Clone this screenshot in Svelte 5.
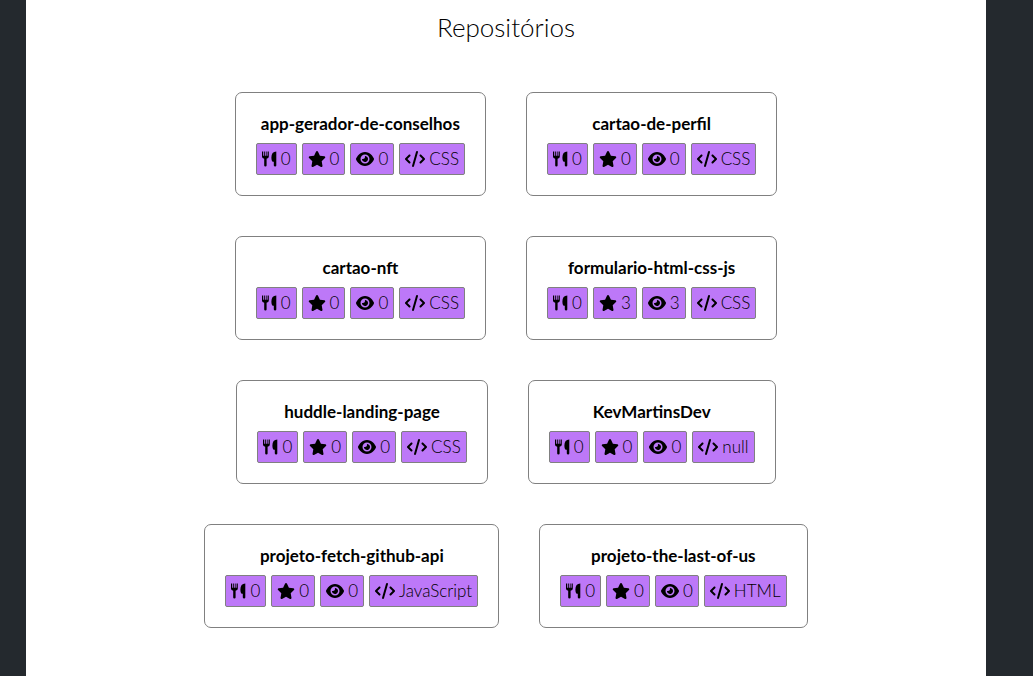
<script>
  const repos = [
    { name: 'app-gerador-de-conselhos', forks: 0, stars: 0, watchers: 0, language: 'CSS' },
    { name: 'cartao-de-perfil', forks: 0, stars: 0, watchers: 0, language: 'CSS' },
    { name: 'cartao-nft', forks: 0, stars: 0, watchers: 0, language: 'CSS' },
    { name: 'formulario-html-css-js', forks: 0, stars: 3, watchers: 3, language: 'CSS' },
    { name: 'huddle-landing-page', forks: 0, stars: 0, watchers: 0, language: 'CSS' },
    { name: 'KevMartinsDev', forks: 0, stars: 0, watchers: 0, language: 'null' },
    { name: 'projeto-fetch-github-api', forks: 0, stars: 0, watchers: 0, language: 'JavaScript' },
    { name: 'projeto-the-last-of-us', forks: 0, stars: 0, watchers: 0, language: 'HTML' }
  ];
</script>

<main>
  <section>
    <h2>Repositórios</h2>
    <ul class="repos">
      {#each repos as repo}
        <li class="card">
          <h3>{repo.name}</h3>
          <ul class="tags">
            <li>
              <svg width="15" height="16" viewBox="0 0 15 16" aria-hidden="true">
                <path d="M0 .5h1.200v4.200h1V.5h.8v4.200h.8V.5h.8v4.200h1V.5h1.200v5.300Q6.800 7.400 4.600 7.700v6.800q0 1-1.200 1t-1.200-1V7.700Q0 7.400 0 5.800zM14.300.5v14q0 1-1.200 1t-1.300-1v-3.700H11Q9.400 10.500 9.400 6.500 9.400.5 14.300.5z" />
              </svg>
              <span>{repo.forks}</span>
            </li>
            <li>
              <svg width="18" height="16" viewBox="0 0 576 512" aria-hidden="true">
                <path d="M316.900 18C311.600 7 300.400 0 288.100 0s-23.400 7-28.800 18L195 150.300 51.400 171.500c-12 1.800-22 10.200-25.700 21.700s-.7 24.200 7.900 32.700L137.800 329 113.200 474.700c-2 12 3 24.200 12.900 31.300s23 8 33.800 2.300l128.300-68.500 128.300 68.500c10.800 5.700 23.900 4.900 33.800-2.300s14.900-19.300 12.900-31.300L438.500 329 542.700 225.900c8.600-8.500 11.700-21.200 7.900-32.700s-13.700-19.900-25.700-21.700L381.200 150.300 316.900 18z" />
              </svg>
              <span>{repo.stars}</span>
            </li>
            <li>
              <svg width="18" height="16" viewBox="0 0 576 512" aria-hidden="true">
                <path d="M288 32c-80.800 0-145.500 36.800-192.600 80.600C48.600 156 17.300 208 2.500 243.700c-3.300 7.900-3.300 16.700 0 24.600C17.300 304 48.600 356 95.400 399.400 142.500 443.200 207.200 480 288 480s145.500-36.800 192.600-80.600c46.800-43.500 78.100-95.400 93-131.100 3.300-7.900 3.300-16.700 0-24.600-14.900-35.700-46.200-87.700-93-131.100C433.500 68.800 368.800 32 288 32zM144 256a144 144 0 1 1 288 0 144 144 0 1 1-288 0zm144-64c0 35.300-28.700 64-64 64-7.100 0-13.900-1.200-20.300-3.300-5.500-1.800-11.900 1.600-11.700 7.400.3 6.900 1.300 13.800 3.200 20.700 13.700 51.200 66.400 81.600 117.600 67.900s81.600-66.400 67.900-117.600c-11.100-41.500-47.800-69.400-88.600-71.100-5.800-.2-9.200 6.100-7.400 11.700 2.100 6.400 3.300 13.200 3.300 20.300z" />
              </svg>
              <span>{repo.watchers}</span>
            </li>
            <li>
              <svg width="20" height="16" viewBox="0 0 640 512" aria-hidden="true">
                <path d="M392.800 1.200c-17-4.900-34.700 5-39.600 22l-128 448c-4.900 17 5 34.700 22 39.600s34.700-5 39.600-22l128-448c4.900-17-5-34.700-22-39.600zm80.600 120.100c-12.500 12.500-12.500 32.800 0 45.300L562.700 256l-89.400 89.400c-12.500 12.500-12.500 32.800 0 45.300s32.800 12.500 45.300 0l112-112c12.500-12.500 12.500-32.800 0-45.300l-112-112c-12.500-12.500-32.800-12.500-45.300 0zm-306.700 0c-12.500-12.500-32.800-12.500-45.300 0l-112 112c-12.500 12.500-12.500 32.800 0 45.300l112 112c12.500 12.500 32.800 12.500 45.300 0s12.500-32.800 0-45.300L77.300 256l89.400-89.400c12.500-12.500 12.500-32.800 0-45.300z" />
              </svg>
              <span>{repo.language}</span>
            </li>
          </ul>
        </li>
      {/each}
    </ul>
  </section>
</main>

<style>
  :global(body) {
    margin: 0;
    background: #24292e;
  }

  main {
    box-sizing: border-box;
    min-height: 100vh;
    padding: 0 47px 0 26px;
    display: flex;
    justify-content: center;
    font-family: Lato, 'Open Sans', sans-serif;
    font-size: 17px;
    line-height: 20px;
    color: #000;
  }

  section {
    box-sizing: border-box;
    width: 100%;
    max-width: 960px;
    padding: 12px 20px 48px;
    background: #fff;
  }

  h2 {
    margin: 0 0 50px;
    font-size: 26px;
    line-height: 30px;
    font-weight: 300;
    text-align: center;
  }

  ul {
    margin: 0;
    padding: 0;
    list-style: none;
  }

  .repos {
    display: flex;
    flex-wrap: wrap;
    justify-content: center;
    gap: 40px;
    max-width: 700px;
    margin: 0 auto;
  }

  .card {
    padding: 20px;
    border: 1px solid #808080;
    border-radius: 7px;
  }

  h3 {
    margin: 0 0 8px;
    font-size: 17px;
    line-height: 22px;
    font-weight: 700;
    text-align: center;
  }

  .tags {
    display: flex;
    justify-content: center;
    gap: 5px;
  }

  .tags li {
    display: flex;
    align-items: center;
    gap: 4px;
    padding: 5px;
    border: 1px solid #808080;
    border-radius: 2px;
    background: #bd78f8;
    font-weight: 300;
  }

  svg {
    flex: none;
    fill: currentColor;
  }
</style>
